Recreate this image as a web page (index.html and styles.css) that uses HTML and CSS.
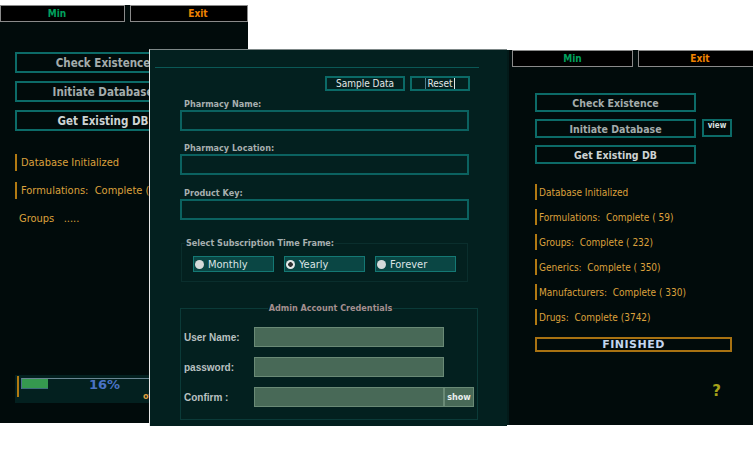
FILE: index.html
```html
<!DOCTYPE html>
<html lang="en">
<head>
    <meta charset="UTF-8">
    <title>Pharmacy Database Setup</title>
    <link rel="stylesheet" href="styles.css">
</head>
<body>
    <div class="desktop">

        <!-- loader window, behind -->
        <div class="window loader loader-back">
            <div class="titlebar">
                <button class="tb-btn tb-min">Min</button>
                <button class="tb-btn tb-exit">Exit</button>
            </div>
            <div class="actions">
                <button class="act-btn">Check Existence</button>
                <button class="act-btn">Initiate Database</button>
                <button class="act-btn bright">Get Existing DB</button>
            </div>
            <ul class="status">
                <li class="done">Database Initialized</li>
                <li class="done">Formulations:  Complete ( 59)</li>
                <li>Groups   .....</li>
            </ul>
            <div class="progress-box">
                <div class="pb-mark"></div>
                <div class="pb-track"><div class="pb-fill" style="width: 26px"></div></div>
                <span class="pb-pct">16%</span>
                <span class="pb-note">of 14</span>
            </div>
        </div>

        <!-- setup window -->
        <div class="window setup">
            <div class="setup-rule"></div>
            <div class="setup-tools">
                <button class="tool-btn tool-sample">Sample Data</button>
                <button class="tool-btn tool-reset"><span class="focus">Reset</span></button>
            </div>
            <label class="field">
                <span class="field-label">Pharmacy Name:</span>
                <input class="field-input" type="text">
            </label>
            <label class="field">
                <span class="field-label">Pharmacy Location:</span>
                <input class="field-input" type="text">
            </label>
            <label class="field">
                <span class="field-label">Product Key:</span>
                <input class="field-input" type="text">
            </label>
            <fieldset class="plan">
                <legend>Select Subscription Time Frame:</legend>
                <div class="plan-opts">
                    <label class="plan-opt"><input type="radio" name="plan">Monthly</label>
                    <label class="plan-opt"><input type="radio" name="plan" checked>Yearly</label>
                    <label class="plan-opt"><input type="radio" name="plan">Forever</label>
                </div>
            </fieldset>
            <fieldset class="admin">
                <legend>Admin Account Credentials</legend>
                <div class="cred-row">
                    <span class="cred-label">User Name:</span>
                    <input class="cred-input" type="text">
                </div>
                <div class="cred-row">
                    <span class="cred-label">password:</span>
                    <input class="cred-input" type="password">
                </div>
                <div class="cred-row">
                    <span class="cred-label">Confirm :</span>
                    <input class="cred-input" type="password">
                    <button class="show-btn">show</button>
                </div>
            </fieldset>
        </div>

        <!-- loader window, front -->
        <div class="window loader loader-front">
            <div class="titlebar">
                <button class="tb-btn tb-min">Min</button>
                <button class="tb-btn tb-exit">Exit</button>
            </div>
            <div class="actions">
                <button class="act-btn">Check Existence</button>
                <div class="act-row">
                    <button class="act-btn">Initiate Database</button>
                    <button class="view-btn">view</button>
                </div>
                <button class="act-btn bright">Get Existing DB</button>
            </div>
            <ul class="status">
                <li class="done">Database Initialized</li>
                <li class="done">Formulations:  Complete ( 59)</li>
                <li class="done">Groups:  Complete ( 232)</li>
                <li class="done">Generics:  Complete ( 350)</li>
                <li class="done">Manufacturers:  Complete ( 330)</li>
                <li class="done">Drugs:  Complete (3742)</li>
            </ul>
            <div class="finished">FINISHED</div>
            <div class="help">?</div>
        </div>

    </div>
</body>
</html>
```

FILE: styles.css
```css
* {
    box-sizing: border-box;
}
body {
    margin: 0;
    background: #fff;
    font-family: "DejaVu Sans Condensed", "DejaVu Sans", sans-serif;
}
button, input {
    font-family: inherit;
    margin: 0;
}
.desktop {
    position: relative;
    width: 753px;
    height: 464px;
    overflow: hidden;
}
.window {
    position: absolute;
}

/* loader windows */
.loader {
    display: flex;
    flex-direction: column;
    align-items: flex-start;
    background: #010b0b;
}
.loader-back {
    left: 0;
    top: 5px;
    width: 248px;
    height: 418px;
    padding-bottom: 20px;
}
.loader-front {
    left: 507px;
    top: 50px;
    width: 246px;
    height: 375px;
    border-left: 2px solid #031a19;
    z-index: 1;
}
.titlebar {
    display: flex;
    gap: 5px;
    height: 17px;
    flex-shrink: 0;
}
.tb-btn {
    flex-shrink: 0;
    background: #000;
    border: 1px solid #8a8a8a;
    font-size: 10px;
    font-weight: bold;
    padding: 0;
}
.tb-min {
    color: #00a15e;
}
.tb-exit {
    color: #f08400;
}
.loader-back .tb-min {
    width: 125px;
    padding-right: 11px;
}
.loader-back .tb-exit {
    width: 118px;
    padding-left: 18px;
}
.loader-front .titlebar {
    margin-left: 3px;
}
.loader-front .tb-min {
    width: 121px;
}
.loader-front .tb-exit {
    width: 124px;
}

.actions {
    display: flex;
    flex-direction: column;
    align-items: flex-start;
}
.act-row {
    display: flex;
    gap: 6px;
}
.act-btn {
    background: transparent;
    border: 2px solid #0c6b68;
    color: #a4acac;
    font-weight: bold;
    padding: 0;
}
.act-btn.bright {
    color: #cdd3d3;
}
.loader-back .actions {
    margin: 30px 0 0 15px;
    gap: 8px;
}
.loader-back .act-btn {
    width: 176px;
    height: 21px;
    font-size: 11.5px;
}
.loader-front .actions {
    margin: 26px 0 0 26px;
    gap: 7px;
}
.loader-front .act-btn {
    width: 161px;
    height: 19px;
    font-size: 10.5px;
}
.view-btn {
    width: 30px;
    height: 18px;
    background: transparent;
    border: 2px solid #0c6b68;
    color: #d8e0e0;
    font-size: 8px;
    font-weight: bold;
    padding: 0 0 5px;
}

.status {
    list-style: none;
    margin: 0;
    padding: 0;
    display: flex;
    flex-direction: column;
    color: #dca13c;
}
.status li {
    display: flex;
    align-items: center;
    white-space: pre;
}
.status li.done {
    border-left: 2px solid #b27a12;
}
.loader-back .status {
    margin: 23px 0 0 15px;
    gap: 11px;
    font-size: 11px;
}
.loader-back .status li {
    height: 17px;
    padding-left: 4px;
}
.loader-front .status {
    margin: 20px 0 0 26px;
    gap: 9px;
    font-size: 10px;
}
.loader-front .status li {
    height: 16px;
    padding-left: 2px;
}

.progress-box {
    position: relative;
    display: flex;
    align-items: flex-start;
    margin: auto 0 0 15px;
    width: 220px;
    height: 28px;
    background: #03201f;
    padding-left: 2px;
}
.pb-mark {
    width: 2px;
    height: 21px;
    margin-top: 1px;
    background: #b27a12;
}
.pb-track {
    width: 166px;
    height: 11px;
    margin: 3px 0 0 2px;
    border-top: 1px solid #6b8592;
    border-left: 1px solid #4d6e8e;
}
.pb-fill {
    height: 10px;
    background: #35994f;
    border-bottom: 1px solid #3d6c7c;
}
.pb-pct {
    position: absolute;
    left: 74px;
    top: 2px;
    font-family: "DejaVu Sans", sans-serif;
    font-size: 13px;
    font-weight: bold;
    line-height: 16px;
    color: #4a72c4;
}
.pb-note {
    position: absolute;
    left: 128px;
    top: 16px;
    font-size: 9px;
    font-weight: bold;
    line-height: 11px;
    color: #e0a040;
}

.finished {
    display: flex;
    align-items: center;
    justify-content: center;
    margin: 12px 0 0 26px;
    width: 197px;
    height: 15px;
    border: 2px solid #a87212;
    color: #c3d6ee;
    font-family: "DejaVu Sans", sans-serif;
    font-size: 11px;
    font-weight: bold;
    letter-spacing: 0.5px;
    line-height: 11px;
}
.help {
    align-self: flex-end;
    margin: 30px 32px 0 0;
    font-family: "DejaVu Sans", sans-serif;
    font-size: 15px;
    font-weight: bold;
    line-height: 18px;
    color: #a6a21a;
}

/* setup window */
.setup {
    left: 149px;
    top: 49px;
    width: 358px;
    height: 377px;
    background: #03201f;
    border-top: 1px solid #7d8787;
    border-left: 1px solid #e8e8e8;
    z-index: 2;
    display: flex;
    flex-direction: column;
    align-items: flex-start;
}
.setup-rule {
    margin: 17px 0 0 5px;
    width: 324px;
    height: 1px;
    background: #0b5856;
}
.setup-tools {
    display: flex;
    gap: 5px;
    margin: 8px 0 0 175px;
}
.tool-btn {
    height: 15px;
    background: transparent;
    border: 2px solid #0b6a67;
    color: #e2e8e8;
    font-size: 10px;
    line-height: 11px;
    padding: 0;
}
.tool-sample {
    width: 80px;
}
.tool-reset {
    width: 60px;
}
.focus {
    display: inline-block;
    padding: 0 1px;
    border-left: 1px solid #4d8090;
    border-right: 1px solid #e0e6e6;
}

.field {
    display: flex;
    flex-direction: column;
    margin: 12px 0 0 30px;
}
.setup-tools + .field {
    margin-top: 8px;
}
.field + .field + .field {
    margin-top: 13px;
}
.field-label {
    padding-left: 4px;
    font-size: 9px;
    font-weight: bold;
    line-height: 11px;
    color: #a7afaf;
}
.field-input {
    width: 289px;
    height: 21px;
    background: transparent;
    border: 2px solid #0b6260;
    outline: none;
}

.plan, .admin {
    min-width: 0;
}
.plan legend, .admin legend {
    font-size: 9px;
    font-weight: bold;
    line-height: 11px;
}
.plan {
    margin: 18px 0 0 31px;
    width: 287px;
    border: 1px solid #0a2e2d;
    padding: 7px 11px 9px;
}
.plan legend {
    margin-left: -8px;
    padding: 0 1px;
    color: #a7afaf;
}
.plan-opts {
    display: flex;
    gap: 10px;
}
.plan-opt {
    display: flex;
    align-items: center;
    width: 81px;
    height: 16px;
    padding-left: 1px;
    background: #0a4644;
    border: 1px solid #147874;
    color: #dce4e4;
    font-size: 11px;
}
.plan-opt input {
    appearance: none;
    width: 9px;
    height: 9px;
    margin: 0 4px 0 0;
    border-radius: 50%;
    background: #d5dada;
}
.plan-opt input:checked {
    background: radial-gradient(circle, #2e3030 0 2px, #e4e8e8 2.6px);
}

.admin {
    margin: 21px 0 0 30px;
    width: 298px;
    border: 1px solid #0b3a38;
    padding: 13px 0 12px 3px;
    display: flex;
    flex-direction: column;
    gap: 10px;
}
.admin legend {
    margin: 0 auto;
    padding: 0 1px;
    color: #a48f8f;
}
.cred-row {
    display: flex;
    align-items: center;
    height: 20px;
}
.cred-label {
    width: 70px;
    font-family: "Liberation Sans", sans-serif;
    font-size: 10px;
    font-weight: bold;
    color: #b9c1c1;
}
.cred-input {
    width: 190px;
    height: 20px;
    background: #486957;
    border: 1px solid #6a8a76;
    outline: none;
}
.show-btn {
    width: 30px;
    height: 20px;
    background: #486957;
    border: 1px solid #6a8a76;
    color: #e8eeee;
    font-size: 9px;
    font-weight: bold;
    padding: 0;
}
```
